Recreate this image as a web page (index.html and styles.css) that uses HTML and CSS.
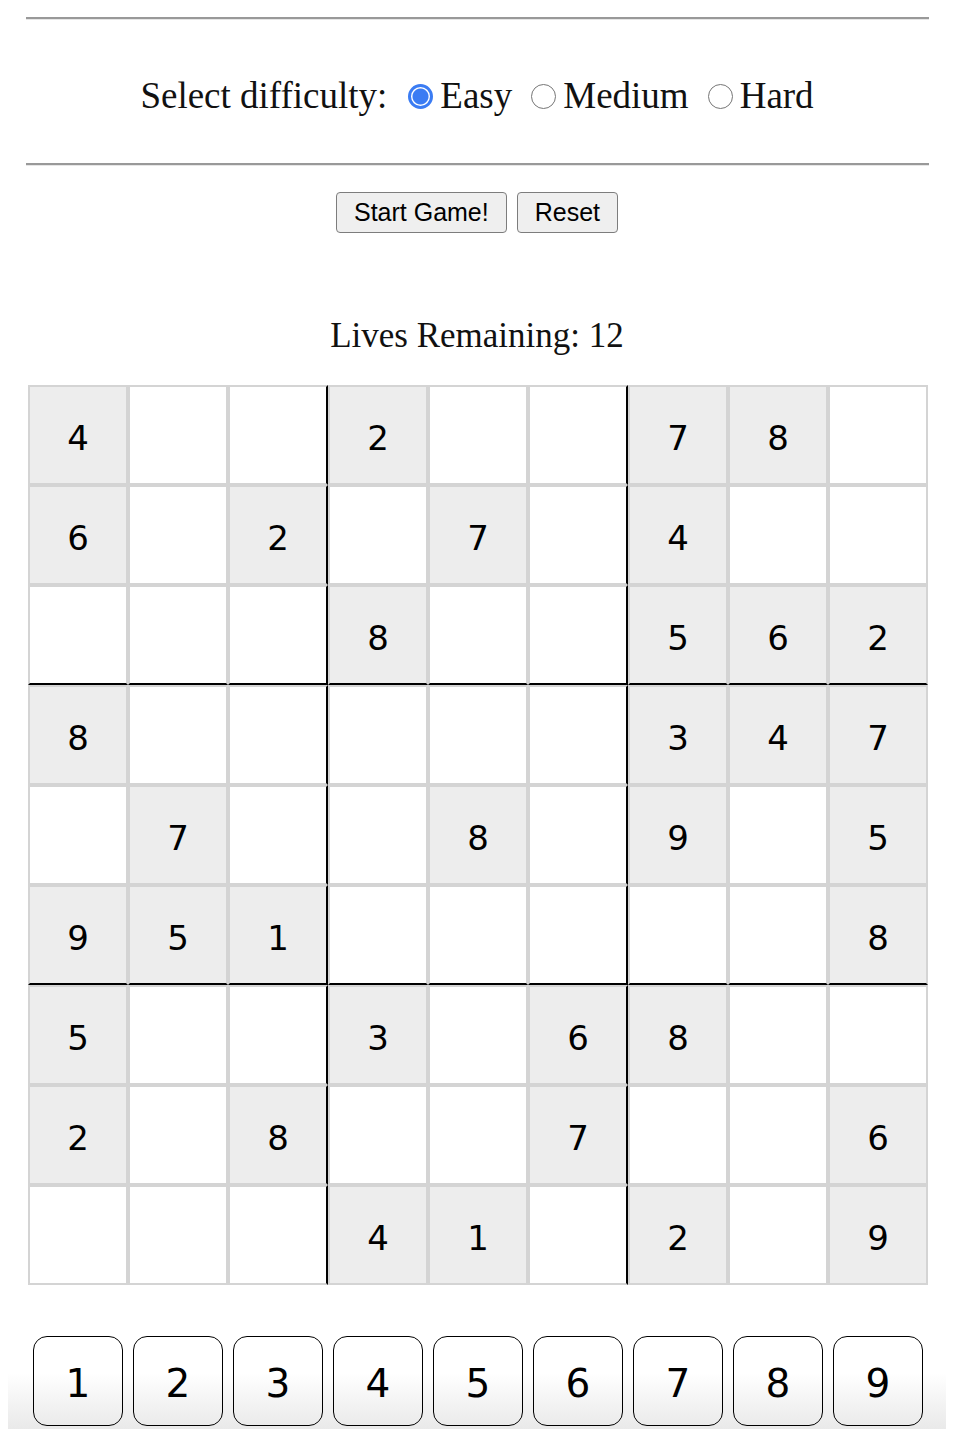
FILE: index.html
```html
<!DOCTYPE html>
<html lang="en">
  <head>
    <meta charset="UTF-8" />
    <link rel="stylesheet" href="styles.css">
  </head>
  <body>
    <hr class="rule" />
    <div id="difficulty">
      <span class="difficulty-label">Select difficulty:</span>
      <label><input type="radio" name="diff" value="easy" checked />Easy</label>
      <label><input type="radio" name="diff" value="medium" />Medium</label>
      <label><input type="radio" name="diff" value="hard" />Hard</label>
    </div>
    <hr class="rule" />

    <div id="controls">
      <button class="ctrl-button">Start Game!</button>
      <button class="ctrl-button">Reset</button>
    </div>

    <p id="lives">Lives Remaining: 12</p>

    <div id="board">
      <div class="cell given">4</div><div class="cell"></div><div class="cell"></div>
      <div class="cell given">2</div><div class="cell"></div><div class="cell"></div>
      <div class="cell given">7</div><div class="cell given">8</div><div class="cell"></div>

      <div class="cell given">6</div><div class="cell"></div><div class="cell given">2</div>
      <div class="cell"></div><div class="cell given">7</div><div class="cell"></div>
      <div class="cell given">4</div><div class="cell"></div><div class="cell"></div>

      <div class="cell"></div><div class="cell"></div><div class="cell"></div>
      <div class="cell given">8</div><div class="cell"></div><div class="cell"></div>
      <div class="cell given">5</div><div class="cell given">6</div><div class="cell given">2</div>

      <div class="cell given">8</div><div class="cell"></div><div class="cell"></div>
      <div class="cell"></div><div class="cell"></div><div class="cell"></div>
      <div class="cell given">3</div><div class="cell given">4</div><div class="cell given">7</div>

      <div class="cell"></div><div class="cell given">7</div><div class="cell"></div>
      <div class="cell"></div><div class="cell given">8</div><div class="cell"></div>
      <div class="cell given">9</div><div class="cell"></div><div class="cell given">5</div>

      <div class="cell given">9</div><div class="cell given">5</div><div class="cell given">1</div>
      <div class="cell"></div><div class="cell"></div><div class="cell"></div>
      <div class="cell"></div><div class="cell"></div><div class="cell given">8</div>

      <div class="cell given">5</div><div class="cell"></div><div class="cell"></div>
      <div class="cell given">3</div><div class="cell"></div><div class="cell given">6</div>
      <div class="cell given">8</div><div class="cell"></div><div class="cell"></div>

      <div class="cell given">2</div><div class="cell"></div><div class="cell given">8</div>
      <div class="cell"></div><div class="cell"></div><div class="cell given">7</div>
      <div class="cell"></div><div class="cell"></div><div class="cell given">6</div>

      <div class="cell"></div><div class="cell"></div><div class="cell"></div>
      <div class="cell given">4</div><div class="cell given">1</div><div class="cell"></div>
      <div class="cell given">2</div><div class="cell"></div><div class="cell given">9</div>
    </div>

    <div id="pad-bar">
      <div id="numpad">
        <button class="num">1</button>
        <button class="num">2</button>
        <button class="num">3</button>
        <button class="num">4</button>
        <button class="num">5</button>
        <button class="num">6</button>
        <button class="num">7</button>
        <button class="num">8</button>
        <button class="num">9</button>
      </div>
    </div>
  </body>
</html>
```

FILE: styles.css
```css
body {
  margin: 8px;
  font-family: "Liberation Serif", serif;
  color: #111;
}

.rule {
  margin: 9px 17px 0 18px;
  border: none;
  border-top: 2px solid #999;
  border-bottom: 1px solid #e6e6e6;
  height: 0;
}

.rule + #controls {
  margin-top: 26px;
}

#difficulty {
  display: flex;
  justify-content: center;
  align-items: center;
  padding: 54px 0 36px;
  font-size: 37px;
  line-height: 44px;
}

.difficulty-label {
  margin-right: 21px;
}

#difficulty label {
  display: flex;
  align-items: center;
  margin-right: 19px;
}

#difficulty label:last-child {
  margin-right: 0;
}

#difficulty input {
  appearance: none;
  width: 25px;
  height: 25px;
  margin: 0 7px 0 0;
  border: 1.5px solid #767676;
  border-radius: 50%;
  background: white;
}

#difficulty input:checked {
  border: 3px solid #3b7cf3;
  background: radial-gradient(circle, #3b7cf3 0 7.5px, white 8.5px);
}

#controls {
  display: flex;
  justify-content: center;
  gap: 10px;
}

.ctrl-button {
  height: 41px;
  padding: 0 17px;
  font-family: "Liberation Sans", sans-serif;
  font-size: 25px;
  color: black;
  background-color: #efefef;
  border: 1.5px solid #7d7d7d;
  border-radius: 4px;
}

#lives {
  margin: 81px 0 0;
  text-align: center;
  font-size: 35px;
  line-height: 44px;
}

#board {
  display: grid;
  grid-template-columns: repeat(9, 100px);
  grid-auto-rows: 100px;
  width: 900px;
  margin: 27px 0 0 20px;
}

.cell {
  box-sizing: border-box;
  display: flex;
  align-items: center;
  justify-content: center;
  padding-top: 5px;
  border: 2px solid #d4d4d4;
  background: white;
  font-family: "DejaVu Sans", sans-serif;
  font-size: 34px;
  color: black;
}

.cell.given {
  background: #ededed;
}

/* thick lines between 3x3 boxes */
.cell:nth-child(9n+3),
.cell:nth-child(9n+6) {
  border-right-color: black;
}

.cell:nth-child(n+19):nth-child(-n+27),
.cell:nth-child(n+46):nth-child(-n+54) {
  border-bottom-color: black;
}

#pad-bar {
  margin: 0 -8px -8px;
  padding: 51px 0 11px 33px;
  background: linear-gradient(#fff 58%, #e6e6e6);
}

#numpad {
  display: flex;
  gap: 10px;
}

.num {
  box-sizing: border-box;
  width: 90px;
  height: 90px;
  padding: 5px 0 0;
  border: 1.5px solid black;
  border-radius: 14px;
  background: transparent;
  font-family: "DejaVu Sans", sans-serif;
  font-size: 39px;
  color: black;
}
```
